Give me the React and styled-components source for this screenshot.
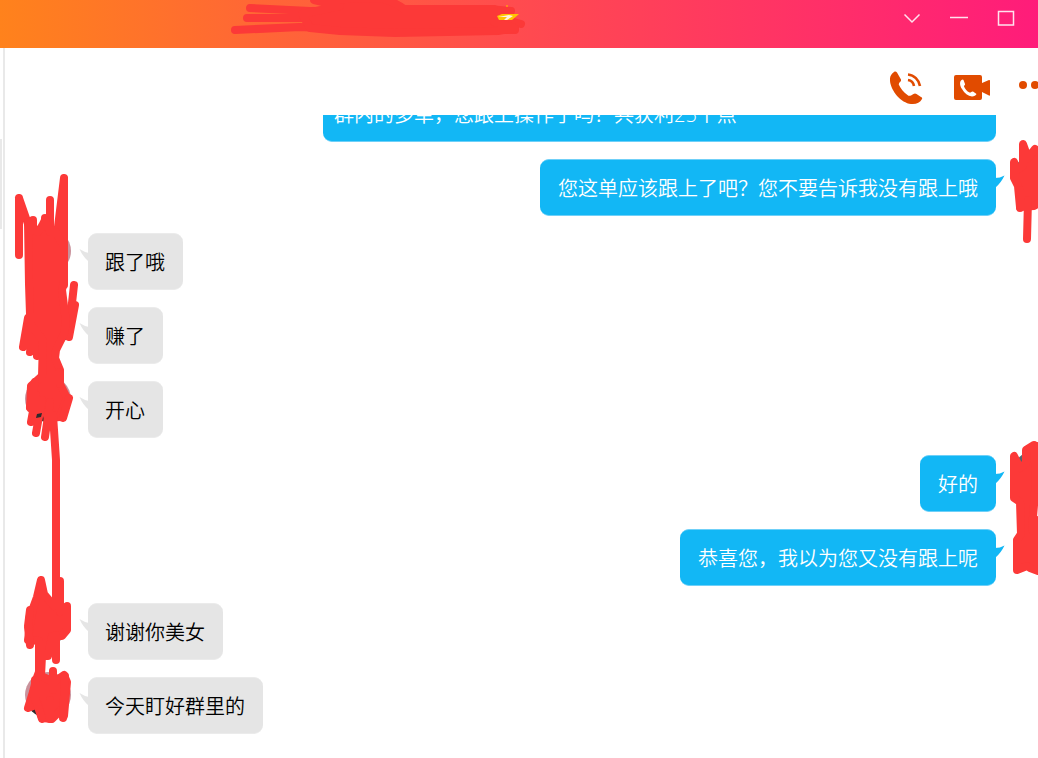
import React from "react";
import styled, {createGlobalStyle} from 'styled-components';

const messages = [
    {
        id: 1,
        mine: true,
        wide: true,
        text: '群内的多单，您跟上操作了吗？共获利25个点',
    },
    {id: 2, mine: true, text: '您这单应该跟上了吧？您不要告诉我没有跟上哦'},
    {id: 3, text: '跟了哦'},
    {id: 4, text: '赚了'},
    {id: 5, text: '开心'},
    {id: 6, mine: true, text: '好的'},
    {id: 7, mine: true, text: '恭喜您，我以为您又没有跟上呢'},
    {id: 8, text: '谢谢你美女'},
    {id: 9, text: '今天盯好群里的'},
];

export default function App() {
    return (
        <Window>
            <GlobalStyle/>
            <TitleBar>
                <TitleMark/>
                <WindowButtons>
                    <IconButton aria-label="更多">
                        <svg width="18" height="18" viewBox="0 0 18 18">
                            <path d="M1.5 5.5L9 13l7.500-7.500" fill="none" stroke="#ffe3ee" strokeWidth="1.500"/>
                        </svg>
                    </IconButton>
                    <IconButton aria-label="最小化">
                        <svg width="18" height="18" viewBox="0 0 18 18">
                            <path d="M0 8.500h18" stroke="#ffe3ee" strokeWidth="1.500"/>
                        </svg>
                    </IconButton>
                    <IconButton aria-label="最大化">
                        <svg width="18" height="18" viewBox="0 0 18 18">
                            <rect x="1.500" y="2.500" width="15" height="13.500" fill="none" stroke="#ffe3ee" strokeWidth="1.500"/>
                        </svg>
                    </IconButton>
                </WindowButtons>
            </TitleBar>
            <Body>
                <Sidebar>
                    <Thumb/>
                </Sidebar>
                <Chat>
                    <Toolbar>
                        <IconButton aria-label="语音通话">
                            <PhoneIcon/>
                        </IconButton>
                        <IconButton aria-label="视频通话">
                            <VideoIcon/>
                        </IconButton>
                        <MoreButton aria-label="更多操作">
                            <svg width="34" height="10" viewBox="0 0 34 10" fill="#e14b00">
                                <circle cx="5" cy="5" r="4"/>
                                <circle cx="17" cy="5" r="4"/>
                                <circle cx="29" cy="5" r="4"/>
                            </svg>
                        </MoreButton>
                    </Toolbar>
                    <Messages>
                        {messages.map(message => (
                            <Message key={message.id} {...message}/>
                        ))}
                        <LeftMarks/>
                        <RightMarks/>
                    </Messages>
                </Chat>
            </Body>
        </Window>
    );
}

function Message({mine, wide, text}) {
    return (
        <Row $mine={mine}>
            {wide ? <Spacer/> : <Avatar $mine={mine}/>}
            <Bubble $mine={mine} $wide={wide}>
                {!wide && <Tail mine={mine}/>}
                <Text>{text}</Text>
            </Bubble>
        </Row>
    );
}

function Tail({mine}) {
    return (
        <TailSvg $mine={mine} width="10" height="14" viewBox="0 0 10 14">
            {mine
                ? <path d="M0 4Q5 4 9.500 1.500Q6 9 0 14z" fill="#12b7f5"/>
                : <path d="M10 5Q5 4 .5 1Q4 9 10 14z" fill="#e5e5e5"/>}
        </TailSvg>
    );
}

function PhoneIcon() {
    return (
        <svg width="34" height="34" viewBox="0 0 34 34">
            <path
                d="M4 1C1 3 -.5 6 0 10C1 20 11 32 21 33C26 33.500 30 32 32 28C32.500 27 32 26.500 31 26L26.500 23C25.500 22.300 24.500 22.300 23.500 23L21 24.500C19.500 25 18.500 25 17.500 24C13.500 21 10.500 17.500 9 14C8.500 13 9 12 10 11C11.300 10 11.300 9 10.700 8L7 1.500C6 .3 5 .3 4 1z"
                fill="#e14b00"/>
            <path d="M18 3.500C24 4 29 9 30 15M18 9C21 9.500 23.500 12 24 15"
                  fill="none" stroke="#e14b00" strokeWidth="2.600"/>
        </svg>
    );
}

function VideoIcon() {
    return (
        <svg width="38" height="28" viewBox="0 0 38 28">
            <path
                d="M4 1H28Q30 1 30 3V9L37 6Q38 5.500 38 7V21Q38 22 37 21.500L30 18V24Q30 26 28 26H4Q2 26 2 24V3Q2 1 4 1z"
                fill="#e14b00"/>
            <path
                d="M9.500 6C7.500 7.500 7.500 11.500 10 15C12.500 19.500 16 22 20 22.500C22 22.500 24 21.500 24.500 20L21 17.500C19.500 17 19 19 17.500 18.500C15 17.500 13 14.500 12 12.500C11.800 11.500 13.500 11 13 10L11.500 6C11 5 10.200 5.500 9.500 6z"
                fill="#fff"/>
        </svg>
    );
}

// red pen strokes over the contact name
function TitleMark() {
    return (
        <svg width="298" height="40" viewBox="230 0 298 40">
            <g fill="none" stroke="#fc3938" strokeWidth="8" strokeLinecap="round" strokeLinejoin="round">
                <path d="M250 8L310 11L490 9L511 11M247 18H500L521 24M235 30L300 27L340 29L515 30"/>
                <path fill="#fc3938" d="M314 0L340 6L302 14L310 28L340 31L395 33L498 31L515 28L494 22V9H404Q395 2 380 -2z"/>
            </g>
            <path d="M497 16L502 14H519L512 20H499z" fill="#ffc400"/>
            <path d="M498 17L509 15L513 16L507 20L504 20L507 17z" fill="#fff3e0"/>
            <circle cx="507" cy="6" r="1" fill="#ff9d10"/>
        </svg>
    );
}

// pen strokes over the contact's avatars
function LeftMarks() {
    return (
        <Marks $side="left" width="75" height="590" viewBox="5 168 75 590">
            <path d="M19 198V255M19 198L28 224M33 220V250M45 218V250M50 200V250M64 178L57 235M64 178V285M74 285L71 312M75 305L69 337M28 318L23 347M34 325L30 352M40 330L37 356"/>
            <path fill="#fc3938" d="M28 222L33 230L38 232L42 226L45 220L50 232H56L60 240L64 246V280L62 290L64 306L66 322L64 334L56 350L55 358L60 370L60 384L67 398L60 417L48 418L42 402L30 408L31 386L42 376L43 340L30 324L30 314L29 284z"/>
            <path d="M35 382L30 407M36 395L31 422M42 400L36 433M50 402L45 437M53 415L56 460V600M69 398L63 418M60 372V384"/>
            <path d="M37 414L42 413L41 417L36 418z" stroke="none" fill="#2e2a2c"/>
            <path fill="#fc3938" d="M41 580L37 597L33 608L30 625L28 640L39 641V672L36 680L33 692L28 708L38 704L42 718L52 719L61 710L64 716L67 682L64 675L54 682L41 676L42 656L48 656L52 636H62L67 630V606L60 612V581V600L54 606L44 594z"/>
            <path d="M28 627L30 645M56 635V660M53 671V690M35 680V700M35 698L42 719M65 676L63 718M50 700V719M30 610L28 626"/>
        </Marks>
    );
}

// pen strokes over my own avatars
function RightMarks() {
    return (
        <Marks $side="right" width="30" height="620" viewBox="1008 138 30 620">
            <path fill="#fc3938" d="M1014 162V178L1018 186L1020 207L1034 206L1040 202V152L1035 149L1028 158L1023 144V166L1017 170z"/>
            <path d="M1028 200L1027 239M1020 190V208"/>
            <path fill="#fc3938" d="M1014 456V498L1020 502L1021 534L1017 540V570L1027 566L1030 568L1038 571V520L1032 530L1036 480L1034 445L1026 450V463L1020 468z"/>
            <path d="M1038 446V490"/>
        </Marks>
    );
}

const GlobalStyle = createGlobalStyle`
  * {
    box-sizing: border-box;
  }

  body {
    margin: 0;
    background: #fff;
    font-family: "Open Sans", "Noto Sans CJK SC", sans-serif;
  }
`

const Window = styled.div`
  display: flex;
  flex-direction: column;
  height: 100vh;
  overflow: hidden;
`

const TitleBar = styled.header`
  display: flex;
  flex: 0 0 48px;
  justify-content: space-between;
  align-items: flex-start;
  padding: 0 23px 0 230px;
  background: linear-gradient(to right, #ff821c, #ff4b4f 50%, #ff1c7a);
`

const WindowButtons = styled.div`
  display: flex;
  gap: 29px;
  padding-top: 9px;
`

const IconButton = styled.button`
  display: flex;
  padding: 0;
  border: 0;
  background: none;
  cursor: pointer;
`

const MoreButton = styled(IconButton)`
  margin-right: -14px;
  padding-bottom: 6px;
`

const Body = styled.div`
  display: flex;
  flex: 1;
  min-height: 0;
`

const Sidebar = styled.aside`
  flex: 0 0 5px;
  padding-top: 91px;
  border-right: 2px solid #e9e9e9;
`

const Thumb = styled.div`
  width: 2px;
  height: 90px;
  background: #e9e9e9;
`

const Chat = styled.main`
  display: flex;
  flex: 1;
  flex-direction: column;
  min-width: 0;
`

const Toolbar = styled.div`
  display: flex;
  flex: 0 0 67px;
  justify-content: flex-end;
  align-items: center;
  gap: 28px;
  padding-top: 12px;
`

const Messages = styled.section`
  position: relative;
  display: flex;
  flex: 1;
  flex-direction: column;
  justify-content: flex-end;
  gap: 17px;
  min-height: 0;
  padding-bottom: 24px;
  overflow: hidden;
`

const Row = styled.div`
  display: flex;
  flex-direction: ${props => props.$mine ? 'row-reverse' : 'row'};
  gap: 17px;
  padding-left: 20px;
`

const Avatar = styled.div`
  flex: 0 0 46px;
  height: 46px;
  margin: ${props => props.$mine ? '-5px -21px 0 0' : '-5px 0 0'};
  border-radius: 50%;
  background: ${props => props.$mine
    ? 'linear-gradient(#5d7078, #2c3a44)'
    : 'linear-gradient(#c9929c 76%, #2e2a2c 76%)'};
`

const Spacer = styled.div`
  flex: 0 0 25px;
`

const Bubble = styled.div`
  position: relative;
  width: ${props => props.$wide ? '673px' : 'auto'};
  padding: 15px 18px 12px ${props => props.$wide ? '11px' : props.$mine ? '18px' : '17px'};
  border: 1px solid ${props => props.$mine ? '#6fd0f8' : '#ebebeb'};
  border-width: 1px 0;
  border-radius: 9px;
  background: ${props => props.$mine ? '#12b7f5' : '#e5e5e5'};
  color: ${props => props.$mine ? '#fff' : '#000'};
`

const Text = styled.p`
  margin: 0;
  font-size: 20px;
  line-height: 28px;
  font-weight: 350;
`

const TailSvg = styled.svg`
  position: absolute;
  top: 14px;
  ${props => props.$mine ? 'right: -9px;' : 'left: -9px;'}
`

const Marks = styled.svg`
  position: absolute;
  bottom: 0;
  ${props => props.$side}: 0;
  fill: none;
  stroke: #fc3938;
  stroke-width: 8px;
  stroke-linecap: round;
  stroke-linejoin: round;
`
